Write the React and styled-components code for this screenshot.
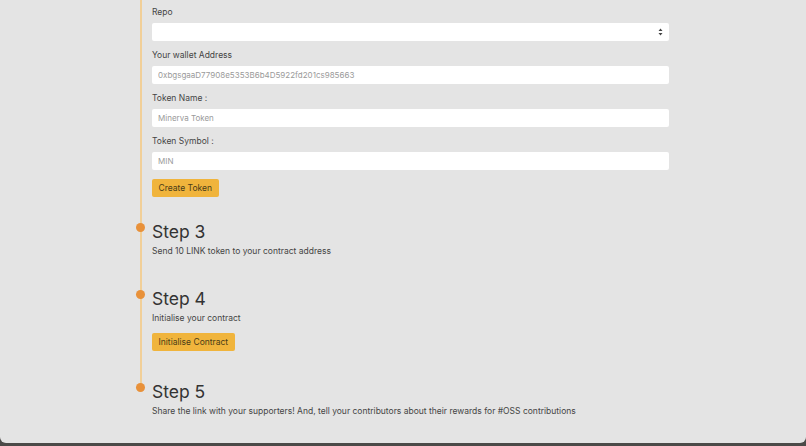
import React from 'react';
import styled, { createGlobalStyle } from 'styled-components'

const GlobalStyle = createGlobalStyle`
  html, body {
    margin: 0;
    padding: 0;
    background: #4b4a48;
  }
  body {
    font-family: "Inter", "Liberation Sans", sans-serif;
    color: #444;
  }
`

const Panel = styled.div`
  width: 806px;
  height: 443px;
  background: #e4e4e4;
  border-radius: 0 0 6px 6px;
  overflow: hidden;
  padding-left: 140px;
  box-sizing: border-box;
`

const Timeline = styled.div`
  position: relative;
  display: flex;
  flex-direction: column;
  width: 529px;
  padding: 6px 0 0 12px;
  &:before {
    content: '';
    position: absolute;
    left: 0;
    top: 0;
    height: 389px;
    width: 2px;
    background: #f1cf98;
  }
`

const Field = styled.div`
  display: flex;
  flex-direction: column;
  margin-bottom: 8px;
`

const Label = styled.label`
  font-size: 8.5px;
  line-height: 12px;
  height: 12px;
  margin-bottom: 5px;
  color: #444;
`

const Input = styled.input`
  box-sizing: border-box;
  width: 517px;
  height: 18px;
  border: none;
  border-radius: 2px;
  background: #fff;
  padding: 0 6px;
  font-family: inherit;
  font-size: 8px;
  color: #777;
  outline: none;
  &::placeholder {
    color: #9a9a9a;
  }
`

const SelectWrap = styled.div`
  position: relative;
  width: 517px;
  height: 18px;
  background: #fff;
  border-radius: 2px;
`

const Arrows = styled.svg`
  position: absolute;
  right: 6px;
  top: 5px;
`

const Button = styled.button`
  align-self: flex-start;
  height: 18px;
  padding: 0 6.5px;
  margin-top: ${p => p.gap || 0}px;
  border: none;
  border-radius: 2px;
  background: #f0b43c;
  color: #4a3c18;
  font-family: inherit;
  font-size: 8.5px;
  cursor: pointer;
`

const Step = styled.div`
  position: relative;
  display: flex;
  flex-direction: column;
  margin-top: ${p => p.gap}px;
`

const Dot = styled.span`
  position: absolute;
  left: -16.5px;
  top: 1.5px;
  width: 9px;
  height: 9px;
  border-radius: 50%;
  background: #e8913a;
`

const Heading = styled.h2`
  margin: 0;
  font-size: 17.5px;
  line-height: 22px;
  font-weight: 400;
  color: #333;
`

const Text = styled.p`
  margin: 2px 0 0;
  font-size: 8.5px;
  line-height: 12px;
  color: #444;
`

const fields = [
  { label: 'Your wallet Address', placeholder: '0xbgsgaaD77908e5353B6b4D5922fd201cs985663' },
  { label: 'Token Name :', placeholder: 'Minerva Token' },
  { label: 'Token Symbol :', placeholder: 'MIN' },
]

const App = () => (
  <>
    <GlobalStyle />
    <Panel>
      <Timeline>
        <Field>
          <Label>Repo</Label>
          <SelectWrap>
            <Arrows width="5" height="8" viewBox="0 0 5 8">
              <path d="M2.5 0.5 L4.5 3 L0.5 3 Z M2.5 7.5 L4.5 5 L0.5 5 Z" fill="#444" />
            </Arrows>
          </SelectWrap>
        </Field>
        {fields.map(f => (
          <Field key={f.label}>
            <Label>{f.label}</Label>
            <Input placeholder={f.placeholder} />
          </Field>
        ))}
        <Button gap={1}>Create Token</Button>
        <Step gap={24}>
          <Dot />
          <Heading>Step 3</Heading>
          <Text>Send 10 LINK token to your contract address</Text>
        </Step>
        <Step gap={31}>
          <Dot />
          <Heading>Step 4</Heading>
          <Text>Initialise your contract</Text>
          <Button gap={9}>Initialise Contract</Button>
        </Step>
        <Step gap={30}>
          <Dot />
          <Heading>Step 5</Heading>
          <Text>Share the link with your supporters! And, tell your contributors about their rewards for #OSS contributions</Text>
        </Step>
      </Timeline>
    </Panel>
  </>
)

export default App
